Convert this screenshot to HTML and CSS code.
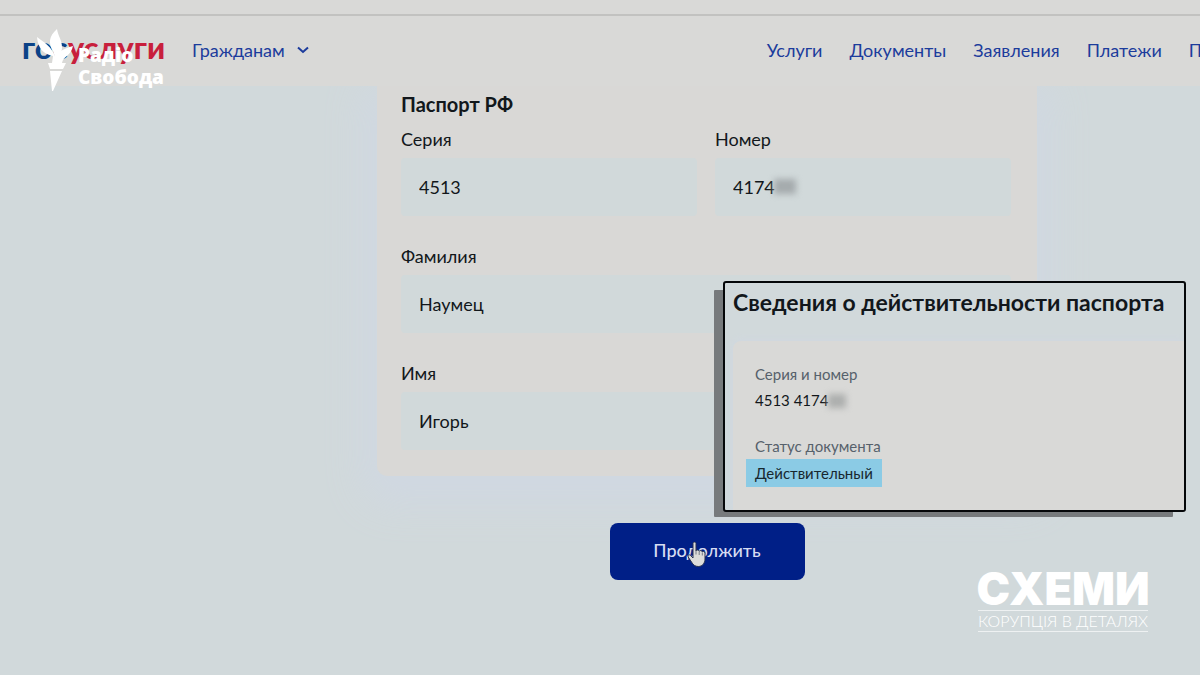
FILE: index.html
```html
<!DOCTYPE html>
<html lang="ru">
<head>
<meta charset="utf-8">
<meta name="viewport" content="width=device-width, initial-scale=1">
<title>Госуслуги — Паспорт РФ</title>
<link rel="stylesheet" href="styles.css">
</head>
<body>
<div class="page">
  <header class="header">
    <a class="logo" href="#"><span class="logo-blue">гос</span><span class="logo-red">услуги</span></a>
    <button class="audience" type="button">Гражданам
      <svg class="chevron" viewBox="0 0 12 8" aria-hidden="true"><path d="M1 1.500l5 4.500 5-4.500"/></svg>
    </button>
    <nav class="nav">
      <a href="#">Услуги</a>
      <a href="#">Документы</a>
      <a href="#">Заявления</a>
      <a href="#">Платежи</a>
      <a href="#">П</a>
    </nav>
  </header>

  <main class="main">
    <form class="form">
      <fieldset class="card">
        <h2 class="card-title">Паспорт РФ</h2>
        <div class="fields">
          <div class="field">
            <label for="series">Серия</label>
            <input id="series" type="text" value="4513">
          </div>
          <div class="field field-masked">
            <label for="number">Номер</label>
            <input id="number" type="text" value="4174">
            <span class="mask" aria-hidden="true"></span>
          </div>
          <div class="field field-wide">
            <label for="surname">Фамилия</label>
            <input id="surname" type="text" value="Наумец">
          </div>
          <div class="field field-wide">
            <label for="name">Имя</label>
            <input id="name" type="text" value="Игорь">
          </div>
        </div>
      </fieldset>
      <button class="submit" type="button">Продолжить
        <svg class="cursor" viewBox="0 0 20 27" aria-hidden="true"><path d="M6 2.5C6 .6 9 .6 9 2.5V10c.3-1.4 3-1.3 3.200.3.5-1.200 2.900-1 3.100.6.6-1 2.700-.6 2.700 1.200V18c0 4-2.500 7.500-6.700 7.500-3.300 0-5.100-1.600-6.800-4.500L1.200 16c-1-1.700.8-3 2.300-1.600L6 17z"/><path class="cursor-lines" d="M9 9.500v4M12.200 10.500v3.500M15.300 11.500v3"/></svg>
      </button>
    </form>
  </main>

  <aside class="popup">
    <h2 class="popup-title">Сведения о действительности паспорта</h2>
    <dl class="details">
      <dt>Серия и номер</dt>
      <dd>4513 4174<span class="mask-inline" aria-hidden="true"></span></dd>
      <dt>Статус документа</dt>
      <dd><mark class="status">Действительный</mark></dd>
    </dl>
  </aside>

  <div class="svoboda" lang="uk">
    <svg class="torch" viewBox="0 0 38 62" aria-hidden="true"><path d="M20 0C12 7 11 14 16 22l2 6C15 18 8 14 0 8c1 11 6 17 16 19l-1 7h3c0-2 1-3 2-4 3-4 5-6 5-12C25 11 21 7 20 0z"/><path d="M36 17c-12 3-17 8-19 17h8c1-7 9-7 11-17z"/><path d="M11 34h18l-3 6H13zM13 42h12L16 62h-1z"/></svg>
    <p class="svoboda-name">Радіо<br>Свобода</p>
  </div>

  <div class="schemes" lang="uk">
    <strong class="schemes-name">СХЕМИ</strong>
    <span class="schemes-tag">КОРУПЦІЯ В ДЕТАЛЯХ</span>
  </div>
</div>
</body>
</html>
```

FILE: styles.css
```css
* {
  box-sizing: border-box;
}

body {
  margin: 0;
  background: #d1d9db;
  color: #12171b;
  font-family: Lato, "Noto Sans", sans-serif;
  font-size: 18px;
  line-height: 24px;
}

h2,
p,
dl,
dd {
  margin: 0;
}

button,
input {
  font: inherit;
}

.page {
  position: relative;
  min-height: 100vh;
  overflow: hidden;
}

.header {
  position: relative;
  z-index: 1;
  display: flex;
  align-items: center;
  height: 86px;
  padding-top: 14px;
  padding-left: 22px;
  background: linear-gradient(#c2c2c0, #c2c2c0) 0 14px / 100% 2px no-repeat #d9d9d7;
  color: #1c3c9c;
}

.logo {
  padding-bottom: 6px;
  font-size: 31px;
  font-weight: 900;
  text-decoration: none;
}

.logo-blue {
  color: #0b4287;
}

.logo-red {
  color: #c81f3c;
}

.audience {
  display: flex;
  align-items: center;
  gap: 12px;
  margin-left: 27px;
  padding: 0;
  border: 0;
  background: none;
  color: inherit;
}

.chevron {
  width: 12px;
  height: 8px;
  fill: none;
  stroke: currentColor;
  stroke-width: 2;
}

.nav {
  display: flex;
  gap: 27px;
  margin-left: auto;
  margin-right: -2px;
}

.nav a {
  color: inherit;
  text-decoration: none;
}

.main {
  display: flex;
  justify-content: center;
  padding-left: 214px;
}

.form {
  display: flex;
  flex-direction: column;
  align-items: center;
  width: 660px;
}

.card {
  width: 100%;
  margin: 0;
  padding: 6px 26px 26px 24px;
  border: 0;
  border-radius: 0 0 10px 10px;
  background: #d9d8d6;
  box-shadow: 0 14px 40px 14px #d0d8e2;
}

.card-title {
  margin-bottom: 11px;
  font-size: 20px;
  line-height: 24px;
}

.fields {
  display: grid;
  grid-template-columns: 1fr 1fr;
  gap: 28px 18px;
}

.field {
  position: relative;
  display: flex;
  flex-direction: column;
  gap: 7px;
}

.field-wide {
  grid-column: 1 / -1;
}

.field input {
  width: 100%;
  height: 58px;
  padding: 0 18px;
  border: 0;
  border-radius: 4px;
  background: #d1d9da;
  color: inherit;
}

.mask {
  position: absolute;
  left: 59px;
  bottom: 22px;
  width: 22px;
  height: 15px;
  background: #a5abad;
  filter: blur(3px);
}

.submit {
  position: relative;
  width: 195px;
  height: 57px;
  margin-top: 47px;
  padding: 0 0 4px;
  border: 0;
  border-radius: 8px;
  background: #001f87;
  color: #d6dcf2;
  font-weight: 500;
}

.cursor {
  position: absolute;
  left: 77px;
  top: 18px;
  width: 20px;
  height: 27px;
  fill: #dcdcda;
  stroke: #26314f;
  stroke-width: 1;
}

.cursor-lines {
  fill: none;
  stroke: #777b85;
}

.popup {
  position: absolute;
  z-index: 2;
  top: 281px;
  right: 14px;
  width: 463px;
  padding-left: 8px;
  overflow: hidden;
  border: 2px solid #050709;
  border-radius: 3px;
  background: #d1d9db;
  box-shadow: -11px 7px 0 -2px #777a7c;
}

.popup-title {
  padding: 6px 0 26px;
  font-size: 23px;
  line-height: 26px;
  white-space: nowrap;
}

.details {
  padding: 20px 22px 23px;
  border-radius: 8px 0 0 0;
  background: #d9d9d7;
  box-shadow: 0 0 8px #d0d7e3;
  font-size: 15px;
  line-height: 26px;
}

.details dt {
  color: #56616b;
}

.details dd + dt {
  margin-top: 20px;
}

.mask-inline {
  display: inline-block;
  width: 18px;
  height: 14px;
  background: #adafae;
  filter: blur(3px);
  vertical-align: -2px;
}

.status {
  display: inline-block;
  margin-left: -9px;
  padding: 1px 9px;
  background: #8bcbe5;
  color: #17272f;
}

.svoboda {
  position: absolute;
  z-index: 3;
  top: 29px;
  left: 37px;
  display: flex;
  gap: 3px;
  color: #fff;
}

.torch {
  width: 38px;
  height: 62px;
  fill: currentColor;
}

.svoboda-name {
  padding-top: 15px;
  font-family: "Open Sans", sans-serif;
  font-size: 19px;
  font-weight: 800;
  line-height: 22px;
}

.schemes {
  position: absolute;
  right: 52px;
  bottom: 43px;
  display: flex;
  flex-direction: column;
  align-items: center;
  width: 170px;
  color: #fff;
}

.schemes-name {
  font-family: Inter, sans-serif;
  font-size: 45px;
  font-weight: 900;
  line-height: 42px;
}

.schemes-tag {
  width: 100%;
  border: solid #eef1f2;
  border-width: 1px 0;
  font-size: 16px;
  font-weight: 300;
  line-height: 20px;
  text-align: center;
  white-space: nowrap;
}
```
